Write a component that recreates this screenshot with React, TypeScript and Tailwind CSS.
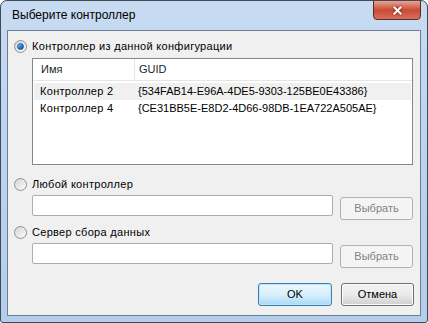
import { X } from 'lucide-react'

const font = { fontFamily: '"Liberation Sans", Arial, sans-serif' }

function Radio({ checked, label }: { checked?: boolean; label: string }) {
  return (
    <div className="flex items-center gap-[5px] pl-[6px] h-[14px]">
      <span className="relative w-[13px] h-[13px] rounded-full border border-[#8e8f8f] bg-gradient-to-br from-[#d6d6d6] to-[#fbfbfb] flex items-center justify-center">
        {checked && (
          <span className="w-[7px] h-[7px] rounded-full bg-gradient-to-br from-[#9fd0f8] via-[#2f7fd6] to-[#0c4d9c] border border-[#1a5b9e]" />
        )}
      </span>
      <span className="text-[11px] text-black leading-none tracking-[0.3px]">{label}</span>
    </div>
  )
}

function PathRow({ top }: { top: string }) {
  return (
    <div className={`flex items-start pl-[24px] ${top}`}>
      <div className="w-[301px] h-[21px] bg-white border border-[#abadb3] rounded-[2px]" />
      <button className="ml-[7px] mt-[2px] w-[73px] h-[23px] rounded-[3px] border border-[#adb2b5] bg-[#f4f4f4] text-[11px] text-[#838383]">
        Выбрать
      </button>
    </div>
  )
}

export default function App() {
  const rows = [
    { name: 'Контроллер 2', guid: '{534FAB14-E96A-4DE5-9303-125BE0E43386}', sel: true },
    { name: 'Контроллер 4', guid: '{CE31BB5E-E8D2-4D66-98DB-1EA722A505AE}', sel: false },
  ]

  return (
    <div className="w-[428px] h-[323px] bg-white" style={font}>
      <div className="w-[428px] h-[323px] flex flex-col rounded-t-[7px] rounded-b-[3px] border border-[#3d4a58] bg-gradient-to-b from-[#c7dbf1] via-[#bcd3ee] to-[#b3cdeb] overflow-hidden">
        {/* Title bar */}
        <div className="relative h-[28px] flex items-center pl-[11px]">
          <span className="text-[12px] text-black">Выберите контроллер</span>
          <div className="absolute right-[6px] top-[-1px] w-[48px] h-[20px] rounded-b-[4px] border border-[#5a2a25] bg-gradient-to-b from-[#e8a393] via-[#c94a35] to-[#d7705a] flex items-center justify-center">
            <X size={13} strokeWidth={3.5} className="text-white drop-shadow-[0_0_1px_#4a1a14]" />
          </div>
        </div>

        {/* Client area */}
        <div className="mx-[6px] mt-[1px] h-[286px] border border-[#6e7e92] bg-[#f0f0f0] flex flex-col">
          <div className="mt-[8px]">
            <Radio checked label="Контроллер из данной конфигурации" />
          </div>

          {/* List view */}
          <div className="ml-[24px] mt-[5px] w-[381px] h-[107px] bg-white border border-[#828790] text-[11px]">
            <div className="flex h-[22px] items-center border-b border-[#e5e5e5]">
              <div className="w-[102px] h-full flex items-center pl-[8px] border-r border-[#e5e5e5] text-[#1e1e1e]">Имя</div>
              <div className="flex-1 pl-[4px] text-[#1e1e1e]">GUID</div>
            </div>
            <div className="mt-[2px]">
              {rows.map((r) => (
                <div key={r.name} className={`flex h-[17px] items-center mx-[1px] ${r.sel ? 'bg-[#f0f0f0]' : ''}`}>
                  <div className="w-[101px] pl-[6px] tracking-[0.3px]">{r.name}</div>
                  <div className="pl-[3px]">{r.guid}</div>
                </div>
              ))}
            </div>
          </div>

          <div className="mt-[12px]">
            <Radio label="Любой контроллер" />
          </div>
          <PathRow top="mt-[4px]" />

          <div className="mt-[5px]">
            <Radio label="Сервер сбора данных" />
          </div>
          <PathRow top="mt-[4px]" />

          <div className="flex justify-end gap-[9px] pr-[6px] mt-[15px]">
            <button className="w-[74px] h-[23px] rounded-[3px] border border-[#3c7fb1] bg-gradient-to-b from-[#eaf6fd] via-[#d9f0fc] to-[#a7d9f5] text-[11px] text-black shadow-[inset_0_0_0_1px_#bfe3f8]">
              OK
            </button>
            <button className="w-[73px] h-[23px] rounded-[3px] border border-[#707070] bg-gradient-to-b from-[#f2f2f2] via-[#ebebeb] to-[#cfcfcf] text-[11px] text-black shadow-[inset_0_0_0_1px_#fcfcfc]">
              Отмена
            </button>
          </div>
        </div>
      </div>
    </div>
  )
}
